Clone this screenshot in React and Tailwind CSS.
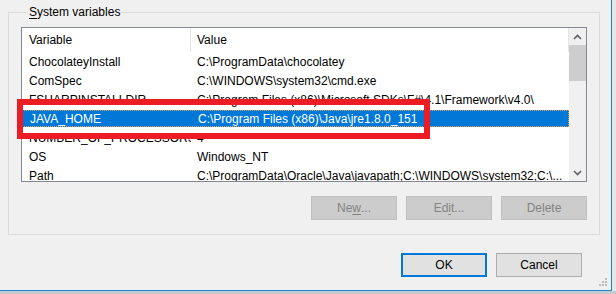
const rows = [
  { name: 'ChocolateyInstall', value: 'C:\\ProgramData\\chocolatey' },
  { name: 'ComSpec', value: 'C:\\WINDOWS\\system32\\cmd.exe' },
  { name: 'FSHARPINSTALLDIR', value: 'C:\\Program Files (x86)\\Microsoft SDKs\\F#\\4.1\\Framework\\v4.0\\' },
  { name: 'JAVA_HOME', value: 'C:\\Program Files (x86)\\Java\\jre1.8.0_151', selected: true },
  { name: 'NUMBER_OF_PROCESSORS', value: '4' },
  { name: 'OS', value: 'Windows_NT' },
  { name: 'Path', value: 'C:\\ProgramData\\Oracle\\Java\\javapath;C:\\WINDOWS\\system32;C:\\...' },
];

function Chevron({ down }) {
  return (
    <svg width="9" height="6" viewBox="0 0 9 6" className={down ? 'rotate-180' : ''}>
      <path d="M1 5l3.5-3.5L8 5" fill="none" stroke="#606060" strokeWidth="1.6" />
    </svg>
  );
}

function DisabledButton({ children }) {
  return (
    <div className="w-[86px] h-[24px] flex items-center justify-center bg-[#cccccc] border border-[#bfbfbf] text-[#838383]">
      {children}
    </div>
  );
}

export default function App() {
  return (
    <div className="w-[616px] h-[294px] flex flex-col bg-[#c9c9c9] font-['Liberation_Sans',sans-serif] text-[12px] leading-[16px] text-black overflow-hidden">
      <div className="flex">
        <div className="relative w-[612px] h-[291px] bg-[#f0f0f0] border-r border-b border-[#1883d7] flex flex-col">
          {/* System variables group */}
          <fieldset className="mt-[4px] ml-[8px] w-[592px] border border-[#dcdcdc] px-[12px] pb-[14px]">
            <legend className="ml-[7px] px-[1px]">
              <span className="underline underline-offset-2">S</span>ystem variables
            </legend>

            <div className="mt-[7px] h-[155px] border border-[#828790] bg-white flex overflow-hidden">
              <div className="flex-1 flex flex-col min-w-0">
                {/* header */}
                <div className="h-[24px] shrink-0 flex items-center">
                  <div className="w-[169px] h-full flex items-center pl-[7px] border-r border-[#e5e5e5]">Variable</div>
                  <div className="flex-1 h-full flex items-center pl-[6px] border-r border-[#e5e5e5]">Value</div>
                </div>
                {rows.map((r) => (
                  <div key={r.name} className="h-[19px] shrink-0 flex items-stretch">
                    <div
                      className={
                        r.selected
                          ? 'flex-1 flex items-center my-[1px] bg-[#0078d7] text-white border border-dotted border-[#e0a060]'
                          : 'flex-1 flex items-center'
                      }
                    >
                      <div className="w-[169px] pl-[7px] whitespace-nowrap overflow-hidden">{r.name}</div>
                      <div className="flex-1 pl-[6px] whitespace-nowrap overflow-hidden">{r.value}</div>
                    </div>
                  </div>
                ))}
              </div>
              {/* scrollbar */}
              <div className="w-[17px] shrink-0 bg-[#f0f0f0] flex flex-col items-center">
                <div className="h-[17px] w-full flex items-center justify-center">
                  <Chevron />
                </div>
                <div className="w-full h-[36px] bg-[#cdcdcd]" />
                <div className="flex-1" />
                <div className="h-[17px] w-full flex items-center justify-center">
                  <Chevron down />
                </div>
              </div>
            </div>

            <div className="mt-[14px] flex justify-end gap-[9px]">
              <DisabledButton>
                Ne<span className="underline underline-offset-2">w</span>...
              </DisabledButton>
              <DisabledButton>
                Ed<span className="underline underline-offset-2">i</span>t...
              </DisabledButton>
              <DisabledButton>
                De<span className="underline underline-offset-2">l</span>ete
              </DisabledButton>
            </div>
          </fieldset>

          <div className="mt-[18px] pr-[29px] flex justify-end gap-[9px]">
            <div className="w-[86px] h-[24px] flex items-center justify-center bg-[#e1e1e1] border-2 border-[#0078d7]">OK</div>
            <div className="w-[86px] h-[24px] flex items-center justify-center bg-[#e1e1e1] border border-[#adadad]">Cancel</div>
          </div>

          {/* resize grip */}
          <svg className="absolute right-[3px] bottom-[3px]" width="10" height="10" viewBox="0 0 10 10">
            <g fill="#bcbcbc">
              <rect x="7" y="1" width="2" height="2" />
              <rect x="4" y="4" width="2" height="2" />
              <rect x="7" y="4" width="2" height="2" />
              <rect x="1" y="7" width="2" height="2" />
              <rect x="4" y="7" width="2" height="2" />
              <rect x="7" y="7" width="2" height="2" />
            </g>
          </svg>

          {/* red highlight annotation */}
          <div className="absolute left-[17px] top-[99px] w-[413px] h-[40px] border-[6px] border-[#ec1c24]" />
        </div>
        <div className="flex-1 bg-[#e6e6e6]" />
      </div>
      <div className="flex-1 bg-[#c9c9c9]" />
    </div>
  );
}
